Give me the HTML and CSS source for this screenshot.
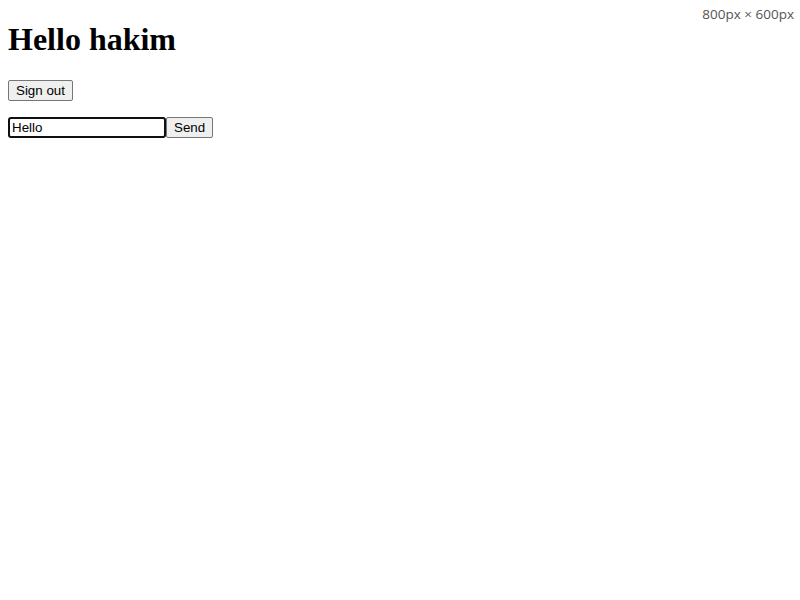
FILE: index.html
```html
<!DOCTYPE html>
<html>
<head>
<meta charset="utf-8">
<title>Chat</title>
<link rel="stylesheet" href="styles.css">
</head>
<body>
<h1 class="title">Hello hakim</h1>
<p class="row"><button class="btn" type="button">Sign out</button></p>
<form class="row" onsubmit="return false"><input class="msg" type="text" value="Hello" autofocus><button class="btn" type="submit">Send</button></form>
<div class="size-badge">800px × 600px</div>
</body>
</html>
```

FILE: styles.css
```css
html, body {
  background: #fff;
}
body {
  margin: 0 8px 8px;
  font-family: "Liberation Serif", serif;
  color: #000;
}
.title {
  font-family: "Liberation Serif", serif;
  font-size: 32px;
  font-weight: bold;
  margin: 21.44px 0;
}
.row {
  margin: 16px 0;
  display: flex;
  align-items: flex-start;
}
.btn {
  font-family: "Liberation Sans", Arial, sans-serif;
  font-size: 13.333px;
  line-height: 15px;
  padding: 2px 7px;
  margin: 0;
  border: 1px solid #767676;
  border-radius: 2px;
  background: #efefef;
  color: #000;
}
.msg {
  font-family: "Liberation Sans", Arial, sans-serif;
  font-size: 13.333px;
  line-height: 15px;
  width: 150px;
  padding: 1px 2px;
  margin: 0;
  border: 2px solid #101010;
  border-radius: 3px;
  outline: none;
  color: #000;
  background: #fff;
}
.size-badge {
  position: absolute;
  top: 5px;
  right: 6px;
  font-family: "Open Sans", "Noto Sans", sans-serif;
  font-size: 13.5px;
  color: #555;
}
```
